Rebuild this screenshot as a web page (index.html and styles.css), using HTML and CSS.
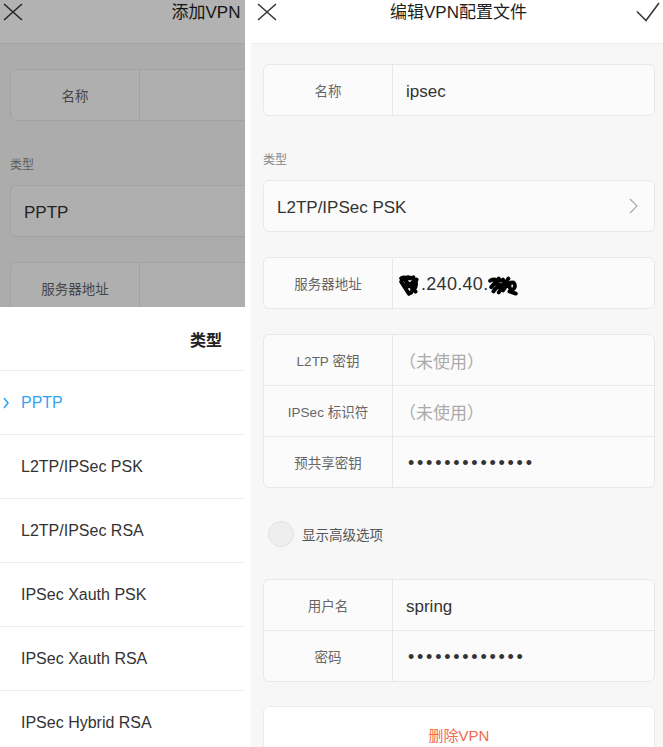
FILE: index.html
```html
<!DOCTYPE html>
<html lang="zh-CN">
<head>
<meta charset="utf-8">
<title>VPN</title>
<link rel="stylesheet" href="styles.css">
</head>
<body>
<section class="screen screen-left">
  <div class="screen-inner">
    <header class="topbar">
      <svg class="icon-close" viewBox="0 0 20 18" width="20" height="18"><path d="M1 1L19 17M19 1L1 17"/></svg>
      <h1 class="topbar-title">添加VPN</h1>
      <span></span>
    </header>
    <main class="form form-left">
      <div class="card card-first">
        <div class="row"><div class="row-label">名称</div><div class="row-value"></div></div>
      </div>
      <div class="section-label">类型</div>
      <div class="card">
        <div class="row row-select"><span class="select-text">PPTP</span></div>
      </div>
      <div class="card card-gap">
        <div class="row"><div class="row-label">服务器地址</div><div class="row-value"></div></div>
      </div>
    </main>
  </div>
  <div class="dim"></div>
  <div class="sheet">
    <div class="sheet-title">类型</div>
    <div class="sheet-item sheet-item-active">
      <svg class="icon-current" viewBox="0 0 6 12" width="6" height="12"><path d="M1 1L5 6L1 11"/></svg>PPTP
    </div>
    <div class="sheet-item">L2TP/IPSec PSK</div>
    <div class="sheet-item">L2TP/IPSec RSA</div>
    <div class="sheet-item">IPSec Xauth PSK</div>
    <div class="sheet-item">IPSec Xauth RSA</div>
    <div class="sheet-item">IPSec Hybrid RSA</div>
  </div>
</section>

<section class="screen screen-right">
  <header class="topbar topbar-right">
    <svg class="icon-close" viewBox="0 0 20 18" width="20" height="18"><path d="M1 1L19 17M19 1L1 17"/></svg>
    <h1 class="topbar-title">编辑VPN配置文件</h1>
    <svg class="icon-check" viewBox="0 0 24 20" width="24" height="20"><path d="M1 9.5L10 18.5L23 1"/></svg>
  </header>
  <main class="form form-right">
    <div class="card card-first">
      <div class="row"><div class="row-label">名称</div><div class="row-value">ipsec</div></div>
    </div>
    <div class="section-label">类型</div>
    <div class="card">
      <div class="row row-select">
        <span class="select-text">L2TP/IPSec PSK</span>
        <svg class="icon-chevron" viewBox="0 0 9 16" width="9" height="16"><path d="M1 1L8 8L1 15"/></svg>
      </div>
    </div>
    <div class="card card-gap">
      <div class="row">
        <div class="row-label">服务器地址</div>
        <div class="row-value">
          <svg class="scribble scribble-a" viewBox="0 0 20 20" width="22" height="22"><path d="M2 4C6 1 9 6 13 3M2 7L9 18M4 4L15 16M8 3C15 4 18 9 13 15M12 8L6 13M16 5L11 17M6 10L13 9"/></svg><span class="addr">.240.40.</span><svg class="scribble scribble-b" viewBox="0 0 28 20" width="30" height="22"><path d="M2 6C7 2 10 9 14 5M3 12L10 4M5 16C9 9 13 13 16 7M10 17L19 4M14 15C19 7 26 5 25 12C23 17 18 13 21 8M20 16L26 18M7 9L15 11"/></svg>
        </div>
      </div>
    </div>
    <div class="card card-gap">
      <div class="row"><div class="row-label">L2TP 密钥</div><div class="row-value row-placeholder">（未使用）</div></div>
      <div class="row"><div class="row-label">IPSec 标识符</div><div class="row-value row-placeholder">（未使用）</div></div>
      <div class="row"><div class="row-label">预共享密钥</div><div class="row-value"><span class="dots">••••••••••••••</span></div></div>
    </div>
    <div class="toggle-row">
      <span class="toggle"></span>
      <span class="toggle-text">显示高级选项</span>
    </div>
    <div class="card">
      <div class="row"><div class="row-label">用户名</div><div class="row-value">spring</div></div>
      <div class="row"><div class="row-label">密码</div><div class="row-value"><span class="dots">•••••••••••••</span></div></div>
    </div>
    <div class="btn-delete">删除VPN</div>
  </main>
</section>
</body>
</html>
```
FILE: styles.css
```css
html, body {
  margin: 0;
  padding: 0;
}
body {
  width: 663px;
  height: 747px;
  overflow: hidden;
  display: flex;
  gap: 6px;
  background: #ffffff;
  font-family: "Liberation Sans", "Noto Sans CJK SC", sans-serif;
  color: #333;
}
.screen {
  position: relative;
  height: 747px;
  overflow: hidden;
  background: #f7f7f7;
}
.screen-left {
  width: 245px;
  flex: none;
}
.screen-inner {
  width: 412px;
}
.screen-right {
  width: 412px;
  flex: none;
}

/* top bar */
.topbar {
  height: 43px;
  border-bottom: 1px solid #ececec;
  background: #ffffff;
  display: grid;
  grid-template-columns: 1fr auto 1fr;
  align-items: start;
  padding: 0 3px;
}
.topbar-right {
  padding: 0 3px 0 6px;
}
.topbar-title {
  margin: 0;
  font-size: 17px;
  font-weight: normal;
  line-height: 26px;
  color: #1e1e1e;
}
.icon-close {
  margin-top: 3px;
  fill: none;
  stroke: #3a3a3a;
  stroke-width: 1.6;
}
.icon-check {
  justify-self: end;
  margin-top: 2px;
  fill: none;
  stroke: #3a3a3a;
  stroke-width: 1.6;
}

/* form */
.form-right {
  padding: 0 8px 0 12px;
}
.form-left {
  padding: 0 10px;
}
.card {
  background: #fbfbfb;
  border: 1px solid #e8e8e8;
  border-radius: 6px;
  overflow: hidden;
}
.card-first {
  margin-top: 20px;
}
.form-left .card-first {
  margin-top: 25px;
}
.card-gap {
  margin-top: 25px;
}
.row {
  display: flex;
  height: 50px;
}
.row + .row {
  border-top: 1px solid #e8e8e8;
}
.row-label {
  width: 128px;
  flex: none;
  border-right: 1px solid #e8e8e8;
  display: flex;
  align-items: center;
  justify-content: center;
  font-size: 13.5px;
  color: #666;
}
.row-value {
  flex: 1;
  display: flex;
  align-items: center;
  padding: 3px 0 0 13px;
  font-size: 17px;
  color: #333;
}
.row-placeholder {
  font-size: 17px;
  color: #aaa;
  padding-left: 6px;
  padding-top: 1px;
}
.dots {
  font-size: 18px;
  letter-spacing: 2.75px;
  color: #333;
  padding-left: 2px;
}
.section-label {
  margin-top: 36px;
  margin-bottom: 12px;
  font-size: 12px;
  line-height: 16px;
  color: #888;
}
.row-select {
  align-items: center;
  justify-content: space-between;
  padding: 0 16px 0 13px;
}
.select-text {
  font-size: 17px;
  color: #333;
  padding-top: 3px;
}
.icon-chevron {
  fill: none;
  stroke: #aaaaaa;
  stroke-width: 1.2;
}
.scribble {
  fill: none;
  stroke: #000;
  stroke-width: 3.6;
  stroke-linecap: round;
  stroke-linejoin: round;
}
.scribble-a {
  margin-left: -7px;
}
.addr {
  font-size: 18px;
  letter-spacing: 0.3px;
}

/* toggle */
.toggle-row {
  display: flex;
  align-items: center;
  gap: 8px;
  height: 26px;
  margin: 33px 0 32px 5px;
}
.toggle {
  width: 24px;
  height: 24px;
  border-radius: 50%;
  background: #eeeeee;
  border: 1px solid #e2e2e2;
}
.toggle-text {
  font-size: 13.5px;
  color: #555;
}

/* delete button */
.btn-delete {
  margin-top: 24px;
  height: 56px;
  box-sizing: border-box;
  background: #ffffff;
  border: 1px solid #ececec;
  border-radius: 6px;
  display: flex;
  align-items: center;
  justify-content: center;
  font-size: 15px;
  color: #f26a4e;
}

/* dim overlay + sheet */
.dim {
  position: absolute;
  inset: 0;
  background: rgba(0, 0, 0, 0.3);
}
.sheet {
  position: absolute;
  top: 307px;
  left: 0;
  width: 412px;
  bottom: 0;
  background: #ffffff;
}
.sheet-title {
  height: 63px;
  border-bottom: 1px solid #ededed;
  display: flex;
  align-items: center;
  justify-content: center;
  font-size: 16px;
  font-weight: bold;
  color: #222;
}
.sheet-item {
  height: 63px;
  border-bottom: 1px solid #ededed;
  display: flex;
  align-items: center;
  padding-left: 21px;
  font-size: 16px;
  color: #333;
}
.sheet-item-active {
  padding-left: 3px;
  color: #33a3f4;
}
.icon-current {
  margin-right: 12px;
  fill: none;
  stroke: #33a3f4;
  stroke-width: 1.6;
}
```
